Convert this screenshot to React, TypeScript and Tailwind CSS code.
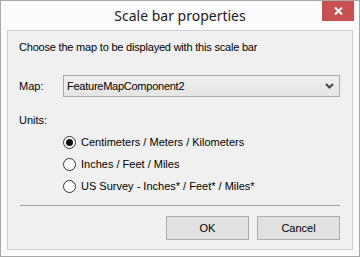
const UNITS = [
  'Centimeters / Meters / Kilometers',
  'Inches / Feet / Miles',
  'US Survey - Inches* / Feet* / Miles*',
];

function Radio({ checked }: { checked?: boolean }) {
  return (
    <span className="w-[13px] h-[13px] rounded-full border border-[#333333] bg-white flex items-center justify-center shrink-0">
      {checked && <span className="w-[7px] h-[7px] rounded-full bg-[#111111]" />}
    </span>
  );
}

function Button({ label }: { label: string }) {
  return (
    <button className="w-[83px] h-[24px] border border-[#adadad] bg-[#e1e1e1] text-[11px] text-black leading-none">
      {label}
    </button>
  );
}

export default function App() {
  return (
    <div
      className="w-[360px] h-[257px] border border-[#a9a9a9] bg-[#fbfbfb] flex flex-col"
      style={{ fontFamily: '"Liberation Sans", Arial, sans-serif' }}
    >
      <div className="h-[29px] grid grid-cols-[1fr_auto_1fr] shrink-0">
        <div />
        <div
          className="pt-[5px] text-[14px] leading-[20px] text-[#222222]"
          style={{ fontFamily: '"Noto Sans", "Open Sans", sans-serif' }}
        >
          Scale bar properties
        </div>
        <div className="flex justify-end items-start pr-[5px]">
          <div className="w-[32px] h-[20px] bg-[#c75050] flex items-center justify-center">
            <svg width="9" height="8" viewBox="0 0 9 8">
              <path d="M1 0.5 L8 7.5 M8 0.5 L1 7.5" stroke="white" strokeWidth="2" />
            </svg>
          </div>
        </div>
      </div>

      <div className="mx-[6px] h-[220px] border border-[#d0d0d0] bg-[#f0f0f0] pl-[11px] pr-[12px] flex flex-col text-[11px] text-black">
        <div className="mt-[9px] h-[14px] leading-[14px] tracking-[-0.2px]">
          Choose the map to be displayed with this scale bar
        </div>

        <div className="mt-[21px] h-[22px] flex items-center">
          <span className="w-[44px]">Map:</span>
          <div className="flex-1 h-[22px] border border-[#acacac] bg-gradient-to-b from-[#f0f0f0] to-[#e5e5e5] flex items-center pl-[3px] pr-[5px]">
            <span className="flex-1 tracking-[-0.25px]">FeatureMapComponent2</span>
            <svg width="9" height="6" viewBox="0 0 9 6">
              <path d="M1 1 L4.5 4.5 L8 1" fill="none" stroke="#444444" strokeWidth="2" />
            </svg>
          </div>
        </div>

        <div className="mt-[16px] h-[14px] leading-[14px]">Units:</div>

        <div className="mt-[4px] pl-[44px] flex flex-col">
          {UNITS.map((u, i) => (
            <div key={u} className="h-[22px] flex items-center gap-[5px]">
              <Radio checked={i === 0} />
              <span>{u}</span>
            </div>
          ))}
        </div>

        <div className="mt-[8px] ml-[1px] border-t border-[#a0a0a0]" />

        <div className="mt-[10px] flex justify-end gap-[8px]">
          <Button label="OK" />
          <Button label="Cancel" />
        </div>
      </div>
    </div>
  );
}
